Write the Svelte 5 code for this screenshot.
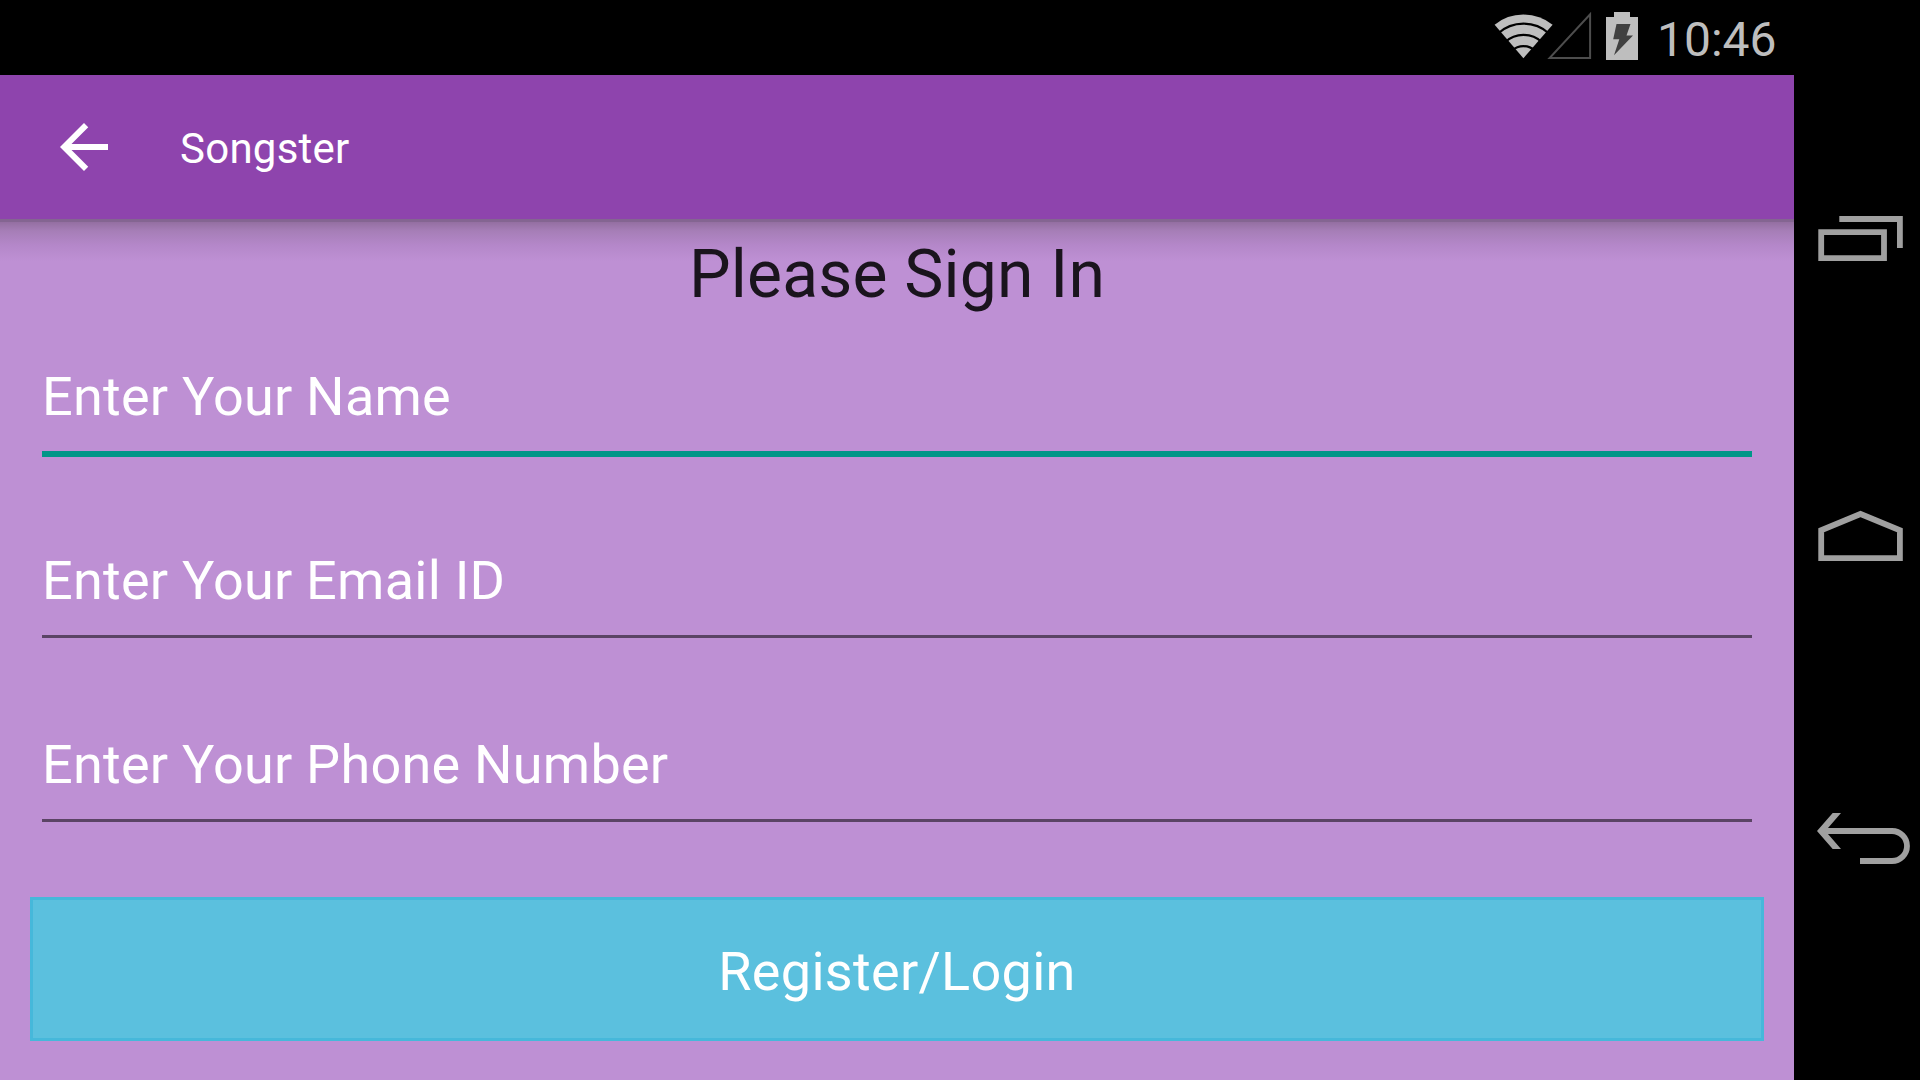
<script>
  let title = 'Songster';
  let clock = '10:46';
  let focused = 'name';

  const fields = [
    { id: 'name', hint: 'Enter Your Name' },
    { id: 'email', hint: 'Enter Your Email ID' },
    { id: 'phone', hint: 'Enter Your Phone Number' }
  ];
</script>

<div class="device">
  <div class="screen">
    <div class="status-bar">
      <svg class="wifi" width="60" height="75" viewBox="0 0 60 75">
        <path d="M29.4 58.2L.6 24.8Q13 14.6 29.4 14.6T58.6 24.8Z" fill="#bebebe" />
        <g fill="none" stroke="#000" stroke-width="2.2">
          <path d="M4 33.5A38 38 0 0 1 55 33.5" />
          <path d="M11 42.3A27 27 0 0 1 48 42.3" />
          <path d="M18 50.6A17 17 0 0 1 41 50.6" />
        </g>
      </svg>
      <svg class="signal" width="46" height="75" viewBox="0 0 46 75">
        <path d="M3.6 58.1H44.1V14.2Z" fill="none" stroke="#4d4d4d" stroke-width="2" />
      </svg>
      <svg class="battery" width="32" height="75" viewBox="0 0 32 75">
        <path d="M8 12h16v5h8v43H0V17h8z" fill="#bebebe" />
        <path d="M10.5 24H24.5l-4 11.5H27L8 55.2l5.3-16H7.2z" fill="#404040" />
      </svg>
      <span class="clock">{clock}</span>
    </div>

    <header class="toolbar">
      <svg class="back" width="72" height="72" viewBox="0 0 24 24">
        <path d="M20 11H7.83l5.59-5.59L12 4l-8 8 8 8 1.41-1.41L7.83 13H20v-2z" fill="#fff" />
      </svg>
      <span class="toolbar-title">{title}</span>
    </header>

    <main class="content">
      <h1>Please Sign In</h1>

      <div class="fields">
        {#each fields as field (field.id)}
          <div class="field" class:focused={field.id === focused}>
            <span class="hint">{field.hint}</span>
            <div class="underline"></div>
          </div>
        {/each}
      </div>

      <button class="submit"><span>Register/Login</span></button>
    </main>
  </div>

  <nav class="nav-bar">
    <!-- recents -->
    <svg width="126" height="100" viewBox="14 0 126 100">
      <path d="M41.2 42.2h62.8v25.9h-62.8z" />
      <path d="M59.3 29h60.6v29" />
    </svg>
    <!-- home -->
    <svg width="126" height="100" viewBox="14 0 126 100">
      <path d="M41.2 68.2V40.2L80.5 24l39.4 16.2v28z" />
    </svg>
    <!-- back -->
    <svg width="126" height="100" viewBox="14 0 126 100">
      <path d="M43 41h69a15 15 0 0 1 0 30H80" />
      <path class="solid" d="M37 41L52.7 23H61L45.4 41 61 59H52.7z" />
    </svg>
  </nav>
</div>

<style>
:global(body) { margin: 0; background: #000; }

.device {
  display: flex;
  width: 1920px;
  height: 1080px;
  background: #000;
  font-family: Roboto, 'Noto Sans', sans-serif;
  overflow: hidden;
}

.screen { display: flex; flex-direction: column; width: 1794px; }

.status-bar { display: flex; align-items: center; justify-content: flex-end; height: 75px; }
.signal { margin-left: -8px; }
.battery { margin-left: 14px; }
.clock {
  width: 137px;
  margin-left: 19px;
  padding-top: 5px;
  color: #bebebe;
  font-size: 48px;
  line-height: 72px;
}

.toolbar {
  display: flex;
  align-items: center;
  gap: 60px;
  height: 144px;
  padding-left: 48px;
  background: #8e44ad;
}
.toolbar-title {
  padding-top: 3px;
  color: #fff;
  font-size: 42px;
  line-height: 50px;
  letter-spacing: 0.25px;
}

.content {
  box-sizing: border-box;
  display: flex;
  flex-direction: column;
  flex: 1;
  padding: 17px 30px 0;
  background:
    linear-gradient(#846591 0 3px, #946fa1 3px, #a67eb7 12px, #b487c9 26px, #be90d4 42px) no-repeat 0 0 / 100% 42px,
    #be90d4;
}

h1 {
  margin: 0;
  color: #1a141d;
  font-size: 66px;
  font-weight: 400;
  line-height: 77px;
  letter-spacing: 0.18px;
  text-align: center;
}

.fields { display: flex; flex-direction: column; gap: 92px; margin-top: 52px; padding: 0 12px; }
.field { height: 92px; }
.hint {
  display: block;
  margin-bottom: 23px;
  color: #fff;
  font-size: 54px;
  line-height: 63px;
  letter-spacing: 0.24px;
}
.underline { height: 3px; background: #5b4465; }
.focused .underline { height: 6px; background: #009688; }

.submit {
  height: 144px;
  margin-top: 72px;
  padding: 5px 0 0;
  border: 3px solid #46b8da;
  background: #5bc0de;
  color: #fff;
  font-family: inherit;
  font-size: 54px;
  letter-spacing: 0.3px;
}

.nav-bar {
  box-sizing: border-box;
  display: flex;
  flex-direction: column;
  justify-content: space-between;
  width: 126px;
  padding: 190px 0;
}
.nav-bar path { fill: none; stroke: #a0a0a0; stroke-width: 5.8; }
.nav-bar .solid { fill: #a0a0a0; stroke: none; }
</style>
